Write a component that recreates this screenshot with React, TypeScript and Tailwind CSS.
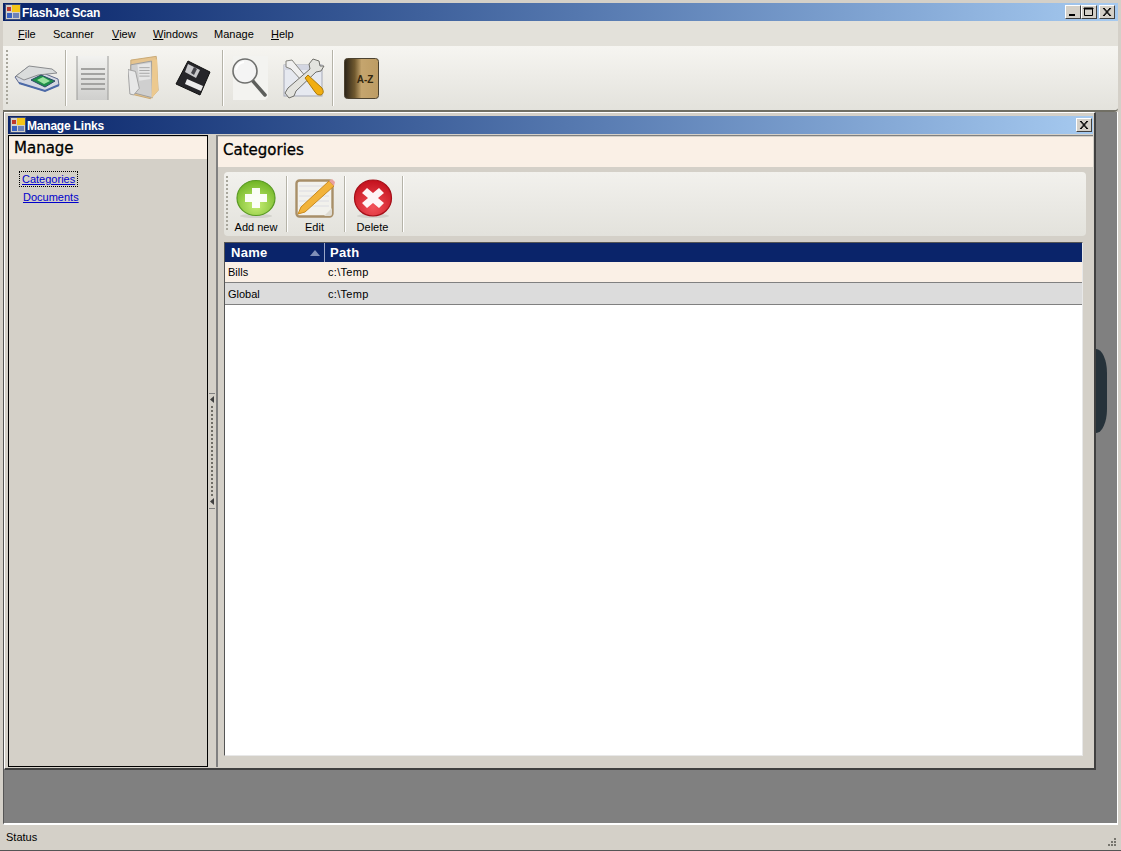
import React from 'react';

const menuItems = [
  { pre: '', ul: 'F', post: 'ile', w: 'w-[35px]' },
  { pre: 'Scanner', ul: '', post: '', w: 'w-[59px]' },
  { pre: '', ul: 'V', post: 'iew', w: 'w-[41px]' },
  { pre: '', ul: 'W', post: 'indows', w: 'w-[61px]' },
  { pre: 'Manage', ul: '', post: '', w: 'w-[57px]' },
  { pre: '', ul: 'H', post: 'elp', w: 'w-[40px]' },
];

function AppIcon() {
  return (
    <svg width="16" height="16" viewBox="0 0 16 16" className="shrink-0">
      <rect x="0.5" y="0.5" width="15" height="15" fill="#d4d0c8" stroke="#40507a" />
      <rect x="2" y="3" width="4" height="4" fill="#c0392b" />
      <rect x="7" y="1" width="8" height="7" fill="#f5c518" />
      <rect x="2" y="9" width="5" height="5" fill="#3a62c0" />
      <rect x="8" y="9" width="6" height="5" fill="#6d83b8" />
    </svg>
  );
}

function WinButton({ kind }: { kind: 'min' | 'max' | 'close' }) {
  return (
    <div className="w-[16px] h-[14px] bg-[#d4d0c8] border border-t-white border-l-white border-r-[#404040] border-b-[#404040] flex items-center justify-center">
      <svg width="12" height="10" viewBox="0 0 12 10">
        {kind === 'min' && <rect x="2" y="7" width="6" height="2" fill="#000" />}
        {kind === 'max' && <path d="M1.5 1.5h8v7h-8z M1 1h9v1H1z" fill="none" stroke="#000" />}
        {kind === 'close' && <path d="M2 1l7 8M3 1l7 8M9 1l-7 8M10 1l-7 8" stroke="#000" strokeWidth="1" />}
      </svg>
    </div>
  );
}

function Grip({ h }: { h: number }) {
  return (
    <svg width="3" height={h} className="shrink-0">
      {Array.from({ length: Math.floor(h / 4) }).map((_, i) => (
        <rect key={i} x="0" y={i * 4} width="2" height="2" fill="#a8a69c" />
      ))}
    </svg>
  );
}

function Sep() {
  return <div className="w-px self-stretch bg-[#b5b3a8] border-r border-white box-content shrink-0" />;
}

function ScannerIcon() {
  return (
    <svg width="46" height="36" viewBox="0 0 46 36">
      <path d="M1 17 L14 7 L44 19 L45 25 L31 31 L5 23 Z" fill="#d5d8e2" stroke="#5f6a8e" />
      <path d="M2 16 L15 6 L38 9 L43 13 L24 15 L10 20 Z" fill="#dadcdc" stroke="#8a8c8e" />
      <path d="M17 20 L27 15 L41 21 L31 27 Z" fill="#1f8f4a" stroke="#2c4a6a" />
      <path d="M23 20 L29 17 L36 21 L30 24 Z" fill="#9be39f" />
      <path d="M5 23 L31 31 L45 25" fill="none" stroke="#4c6aa8" strokeWidth="2" />
    </svg>
  );
}

function DocIcon() {
  return (
    <svg width="33" height="46" viewBox="0 0 33 46">
      <defs>
        <linearGradient id="dg" x1="0" y1="0" x2="0" y2="1">
          <stop offset="0" stopColor="#f2f2f0" />
          <stop offset="1" stopColor="#cfcfcd" />
        </linearGradient>
      </defs>
      <rect x="1" y="1" width="31" height="44" fill="url(#dg)" />
      <path d="M1 1v44M32 1v44" stroke="#9a9a98" />
      {[13, 18, 23, 28, 33].map((y) => (
        <rect key={y} x="5" y={y} width="24" height="2" fill="#a3a3a1" />
      ))}
    </svg>
  );
}

function FolderIcon() {
  return (
    <svg width="32" height="46" viewBox="0 0 34 46">
      <path d="M3 4 L30 0 L32 36 L24 45 L3 40 Z" fill="#e6c48e" stroke="#c7a873" />
      <path d="M3 9 L25 5 L26 44 L3 38 Z" fill="#cfcfcf" stroke="#9c9c9c" />
      <path d="M10 9 L24 7 L24 24 L12 26 Z" fill="#e6e6e6" />
      <path d="M12 12h11M12 15h11M12 18h11M12 21h11" stroke="#a5a5a5" />
      <path d="M0 14 L8 16 L12 34 L6 41 L2 40 Z" fill="#e8e8e8" stroke="#a0a0a0" />
      <path d="M26 4 L31 3 L32 36 L25 45 Z" fill="#ecc98f" />
    </svg>
  );
}

function FloppyIcon() {
  return (
    <svg width="36" height="36" viewBox="0 0 36 36">
      <path d="M13 1 L35 12 L25 35 L1 24 Z" fill="#26262a" stroke="#111" />
      <path d="M13 4 L25 10 L21 18 L10 12 Z" fill="#c9c9cc" />
      <path d="M19 7 L22 9 L19 15 L16 13 Z" fill="#44444a" />
      <path d="M12 19 L28 26 L26 31 L10 24 Z" fill="#ececec" />
    </svg>
  );
}

function MagnifierIcon() {
  return (
    <svg width="38" height="44" viewBox="0 0 38 44">
      <path d="M2 0 H37 V41 L34 44 H2 Z" fill="#f3f3f0" />
      <line x1="21" y1="24" x2="34" y2="39" stroke="#5d5f5c" strokeWidth="3.5" strokeLinecap="round" />
      <circle cx="14" cy="15" r="12" fill="#f4f4f4" stroke="#6f706e" strokeWidth="1.6" />
      <path d="M5 14a9 9 0 0 1 8-8" stroke="#fff" strokeWidth="2" fill="none" />
    </svg>
  );
}

function ToolsIcon() {
  return (
    <svg width="44" height="42" viewBox="0 0 44 42">
      <rect x="2" y="8" width="38" height="31" fill="#e6e9f0" stroke="#a6a9b8" />
      <path d="M2 8h38v5H2z" fill="#d3d6e2" />
      <path d="M4 4 L10 3 L14 8 L24 20 L20 24 L9 12 L4 10 Z" fill="#f0f0f0" stroke="#84847e" />
      <path d="M37 4 L31 2 L27 7 L28 12 L6 31 L3 36 L7 41 L12 39 L14 34 L34 15 L39 14 L42 9 L38 9 Z" fill="#e3e3de" stroke="#6f6f6a" />
      <path d="M23 21 L26 18 L40 31 Q43 36 39 38 Q35 39 33 35 Z" fill="#f1ae11" stroke="#a87a10" />
    </svg>
  );
}

function BookIcon() {
  return (
    <svg width="35" height="41" viewBox="0 0 35 41">
      <defs>
        <linearGradient id="bg" x1="0" y1="0" x2="1" y2="0">
          <stop offset="0" stopColor="#2a2318" />
          <stop offset="0.3" stopColor="#70592f" />
          <stop offset="0.5" stopColor="#c5a56e" />
          <stop offset="1" stopColor="#bd9c63" />
        </linearGradient>
      </defs>
      <rect x="0.5" y="0.5" width="34" height="40" rx="3" fill="url(#bg)" stroke="#4c4230" />
      <text x="21" y="25" textAnchor="middle" fontSize="10" fontWeight="700" fontFamily="Liberation Sans" fill="#33280f">A-Z</text>
    </svg>
  );
}

function AddIcon() {
  return (
    <svg width="40" height="40" viewBox="0 0 40 40">
      <defs>
        <radialGradient id="ag" cx="0.5" cy="0.7" r="0.7">
          <stop offset="0" stopColor="#c8ee76" />
          <stop offset="1" stopColor="#6fb424" />
        </radialGradient>
      </defs>
      <ellipse cx="20" cy="38" rx="16" ry="2" fill="#d2d1cb" />
      <ellipse cx="20" cy="20" rx="19" ry="17.5" fill="url(#ag)" stroke="#5a9a24" strokeWidth="1.2" />
      <path d="M16 10h8v6h7v8h-7v6h-8v-6H9v-8h7z" fill="#fff" fillOpacity="0.95" />
    </svg>
  );
}

function EditIcon() {
  return (
    <svg width="42" height="40" viewBox="0 0 42 40">
      <rect x="2.5" y="2.5" width="36" height="36" rx="3" fill="#f2f1ec" stroke="#a88f68" strokeWidth="2.4" />
      {[8, 13, 18, 23, 28].map((y) => (
        <line key={y} x1="5" x2="35" y1={y} y2={y} stroke="#dcdce2" />
      ))}
      <path d="M4 36 L7 29 L35 3 L40 8 L11 34 Z" fill="#f2b33a" stroke="#c98a1e" />
      <path d="M35 3 L38 1 L41 4 L40 8 Z" fill="#e9a0a0" />
      <path d="M30 38 L38 30 V36 Q38 38 36 38 Z" fill="#dedbd2" />
    </svg>
  );
}

function DeleteIcon() {
  return (
    <svg width="40" height="40" viewBox="0 0 40 40">
      <defs>
        <radialGradient id="rg" cx="0.5" cy="0.75" r="0.75">
          <stop offset="0" stopColor="#f3535a" />
          <stop offset="1" stopColor="#c3101c" />
        </radialGradient>
      </defs>
      <ellipse cx="20" cy="38" rx="16" ry="2" fill="#d2d1cb" />
      <ellipse cx="20" cy="20" rx="18.5" ry="18" fill="url(#rg)" stroke="#a50f18" strokeWidth="1.2" />
      <path d="M14 10l6 5 6-5 5 5-6 5 6 5-5 5-6-5-6 5-5-5 6-5-6-5z" fill="#fff" fillOpacity="0.95" />
    </svg>
  );
}

function SplitterGrip() {
  return (
    <div className="flex-1 flex flex-col items-center justify-center">
      <div className="flex flex-col items-center h-[116px] justify-between">
        <div className="w-[6px] h-px bg-[#808080]" />
        <svg width="6" height="8"><path d="M5 0v7L1 3.5z" fill="#404040" /></svg>
        <svg width="3" height="90">
          {Array.from({ length: 23 }).map((_, i) => (
            <rect key={i} x="0" y={i * 4} width="2" height="2" fill="#6f6d66" />
          ))}
        </svg>
        <svg width="6" height="8"><path d="M5 0v7L1 3.5z" fill="#404040" /></svg>
        <div className="w-[6px] h-px bg-[#808080]" />
      </div>
    </div>
  );
}

function ResizeGrip() {
  return (
    <svg width="12" height="12" className="shrink-0">
      {[[8, 1], [5, 4], [8, 4], [2, 7], [5, 7], [8, 7]].map(([x, y]) => (
        <rect key={`${x}-${y}`} x={x} y={y} width="2" height="2" fill="#77756e" />
      ))}
    </svg>
  );
}

function SubButton({ label, w, children }: { label: string; w: string; children: React.ReactNode }) {
  return (
    <div className={`${w} shrink-0 self-start mt-[4px] pr-[3px] flex flex-col items-center leading-[14px] text-black`}>
      <div className="h-[42px] flex items-end justify-center">{children}</div>
      <div className="mt-[2px]">{label}</div>
    </div>
  );
}

export default function App() {
  return (
    <div className="relative w-[1121px] h-[851px] overflow-hidden bg-[#d4d0c8] flex flex-col pt-[3px] px-[3px] border-b border-[#555] font-['Liberation_Sans',sans-serif] text-[11px] text-black">
      {/* main title bar */}
      <div className="h-[18px] shrink-0 flex items-center pl-[2px] pr-[3px] gap-px bg-gradient-to-r from-[#0a246a] to-[#a6caf0]">
        <AppIcon />
        <span className="font-bold text-white text-[12px] tracking-[-0.2px] pt-px">FlashJet Scan</span>
        <div className="ml-auto flex items-center">
          <WinButton kind="min" />
          <WinButton kind="max" />
          <div className="w-[2px]" />
          <WinButton kind="close" />
        </div>
      </div>

      {/* menu */}
      <div className="h-[25px] shrink-0 flex items-center pl-[15px] bg-[#e3e1da] pt-[1px]">
        {menuItems.map((m) => (
          <div key={m.pre + m.post} className={`${m.w} shrink-0`}>
            {m.pre}
            {m.ul && <span className="underline">{m.ul}</span>}
            {m.post}
          </div>
        ))}
      </div>

      {/* main toolbar */}
      <div className="h-[66px] shrink-0 flex items-center pl-[3px] bg-gradient-to-b from-[#f6f5f1] to-[#e3e2dc] rounded-br-[4px] border-b-2 border-[#716f64]">
        <Grip h={56} />
        <div className="flex items-center justify-center w-[56px] shrink-0 self-stretch"><ScannerIcon /></div>
        <div className="h-[56px] flex"><Sep /></div>
        <div className="flex items-center justify-center w-[51px] shrink-0 self-stretch"><DocIcon /></div>
        <div className="flex items-center justify-center w-[52px] shrink-0 self-stretch"><FolderIcon /></div>
        <div className="flex items-center justify-center w-[52px] pr-[6px] shrink-0 self-stretch"><FloppyIcon /></div>
        <div className="h-[56px] flex"><Sep /></div>
        <div className="flex items-center justify-center w-[52px] shrink-0 self-stretch"><MagnifierIcon /></div>
        <div className="flex items-center justify-center w-[56px] shrink-0 self-stretch"><ToolsIcon /></div>
        <div className="h-[56px] flex"><Sep /></div>
        <div className="flex items-center justify-center w-[55px] shrink-0 self-stretch"><BookIcon /></div>
      </div>

      {/* mdi client area */}
      <div className="flex-1 min-h-0 flex flex-col items-start bg-[#808080] border-l border-l-[#555] border-r border-r-white border-b-2 border-b-white">
        <div className="w-[1092px] h-[658px] shrink-0 flex flex-col bg-[#d4d0c8] border-t border-l border-white border-r-2 border-b-2 border-r-[#404040] border-b-[#404040] pt-[3px] pl-[3px] pr-px">
          {/* child title */}
          <div className="h-[18px] shrink-0 flex items-center pl-[2px] pr-px gap-px bg-gradient-to-r from-[#0a246a] to-[#a6caf0]">
            <AppIcon />
            <span className="font-bold text-white text-[12px] tracking-[-0.2px] pt-px">Manage Links</span>
            <div className="ml-auto"><WinButton kind="close" /></div>
          </div>

          <div className="flex-1 min-h-0 flex pt-px pb-px">
            {/* left panel */}
            <div className="w-[200px] shrink-0 border border-black flex flex-col bg-[#d4d0c8] pt-px">
              <div className="h-[22px] shrink-0 bg-[#faf0e6] flex items-center pl-[5px] text-[15px] font-['DejaVu_Sans',sans-serif] text-black [-webkit-text-stroke:0.3px_black]">Manage</div>
              <div className="flex flex-col items-start pl-[11px] pt-[13px] gap-[4px] text-[#0000cc]">
                <span className="underline outline-1 outline-dotted outline-black px-[2px] leading-[14px]">Categories</span>
                <span className="underline px-[3px] leading-[14px]">Documents</span>
              </div>
            </div>

            {/* splitter */}
            <div className="w-[8px] shrink-0 flex flex-col"><SplitterGrip /></div>

            {/* right panel */}
            <div className="flex-1 min-w-0 flex flex-col border-l-2 border-[#808080] border-t border-t-[#808080] pt-px">
              <div className="h-[30px] shrink-0 bg-[#faf0e6] flex items-start pt-[2px] pl-[5px] text-[15px] font-['DejaVu_Sans',sans-serif] text-black [-webkit-text-stroke:0.3px_black]">Categories</div>
              <div className="mt-[5px] ml-[6px] mr-[7px] h-[64px] shrink-0 flex items-center pl-[2px] rounded-[4px] bg-gradient-to-b from-[#f2f1ed] to-[#e3e2dc]">
                <Grip h={56} />
                <SubButton label="Add new" w="w-[57px]"><AddIcon /></SubButton>
                <div className="h-[56px] flex"><Sep /></div>
                <SubButton label="Edit" w="w-[56px]"><EditIcon /></SubButton>
                <div className="h-[56px] flex"><Sep /></div>
                <SubButton label="Delete" w="w-[56px]"><DeleteIcon /></SubButton>
                <div className="h-[56px] flex"><Sep /></div>
              </div>

              {/* grid */}
              <div className="mt-[6px] ml-[6px] w-[859px] h-[514px] shrink-0 flex flex-col bg-white border-t border-l border-[#555] border-r border-r-[#e8e8e8] border-b border-b-[#e8e8e8]">
                <div className="h-[19px] shrink-0 flex items-center bg-[#0a246a] text-white font-bold text-[13px] tracking-[0.3px]">
                  <div className="w-[100px] h-full shrink-0 flex items-center pl-[6px] border-r border-[#9aa6c8]">
                    <span>Name</span>
                    <svg width="10" height="6" className="ml-auto mr-[4px]"><path d="M0 6L5 0l5 6z" fill="#8090b8" /></svg>
                  </div>
                  <div className="pl-[5px]">Path</div>
                </div>
                <div className="h-[21px] shrink-0 flex items-center bg-[#faf0e6] border-b border-[#808080]">
                  <div className="w-[103px] pl-[3px] shrink-0">Bills</div>
                  <div className="tracking-[0.3px]">c:\Temp</div>
                </div>
                <div className="h-[22px] shrink-0 flex items-center pt-px bg-[#dcdcdc] border-b border-[#808080]">
                  <div className="w-[103px] pl-[3px] shrink-0">Global</div>
                  <div className="tracking-[0.3px]">c:\Temp</div>
                </div>
              </div>
            </div>
          </div>
        </div>
      </div>

      {/* status bar */}
      <div className="h-[25px] shrink-0 flex items-center pl-[3px] pb-[1px]">
        <span>Status</span>
        <div className="ml-auto self-end"><ResizeGrip /></div>
      </div>

      {/* dark shape showing behind the child window */}
      <div className="absolute left-[1096px] top-[349px] w-[11px] h-[84px] bg-[#26323a] rounded-tr-[11px_24px] rounded-br-[11px_24px]" />
    </div>
  );
}
